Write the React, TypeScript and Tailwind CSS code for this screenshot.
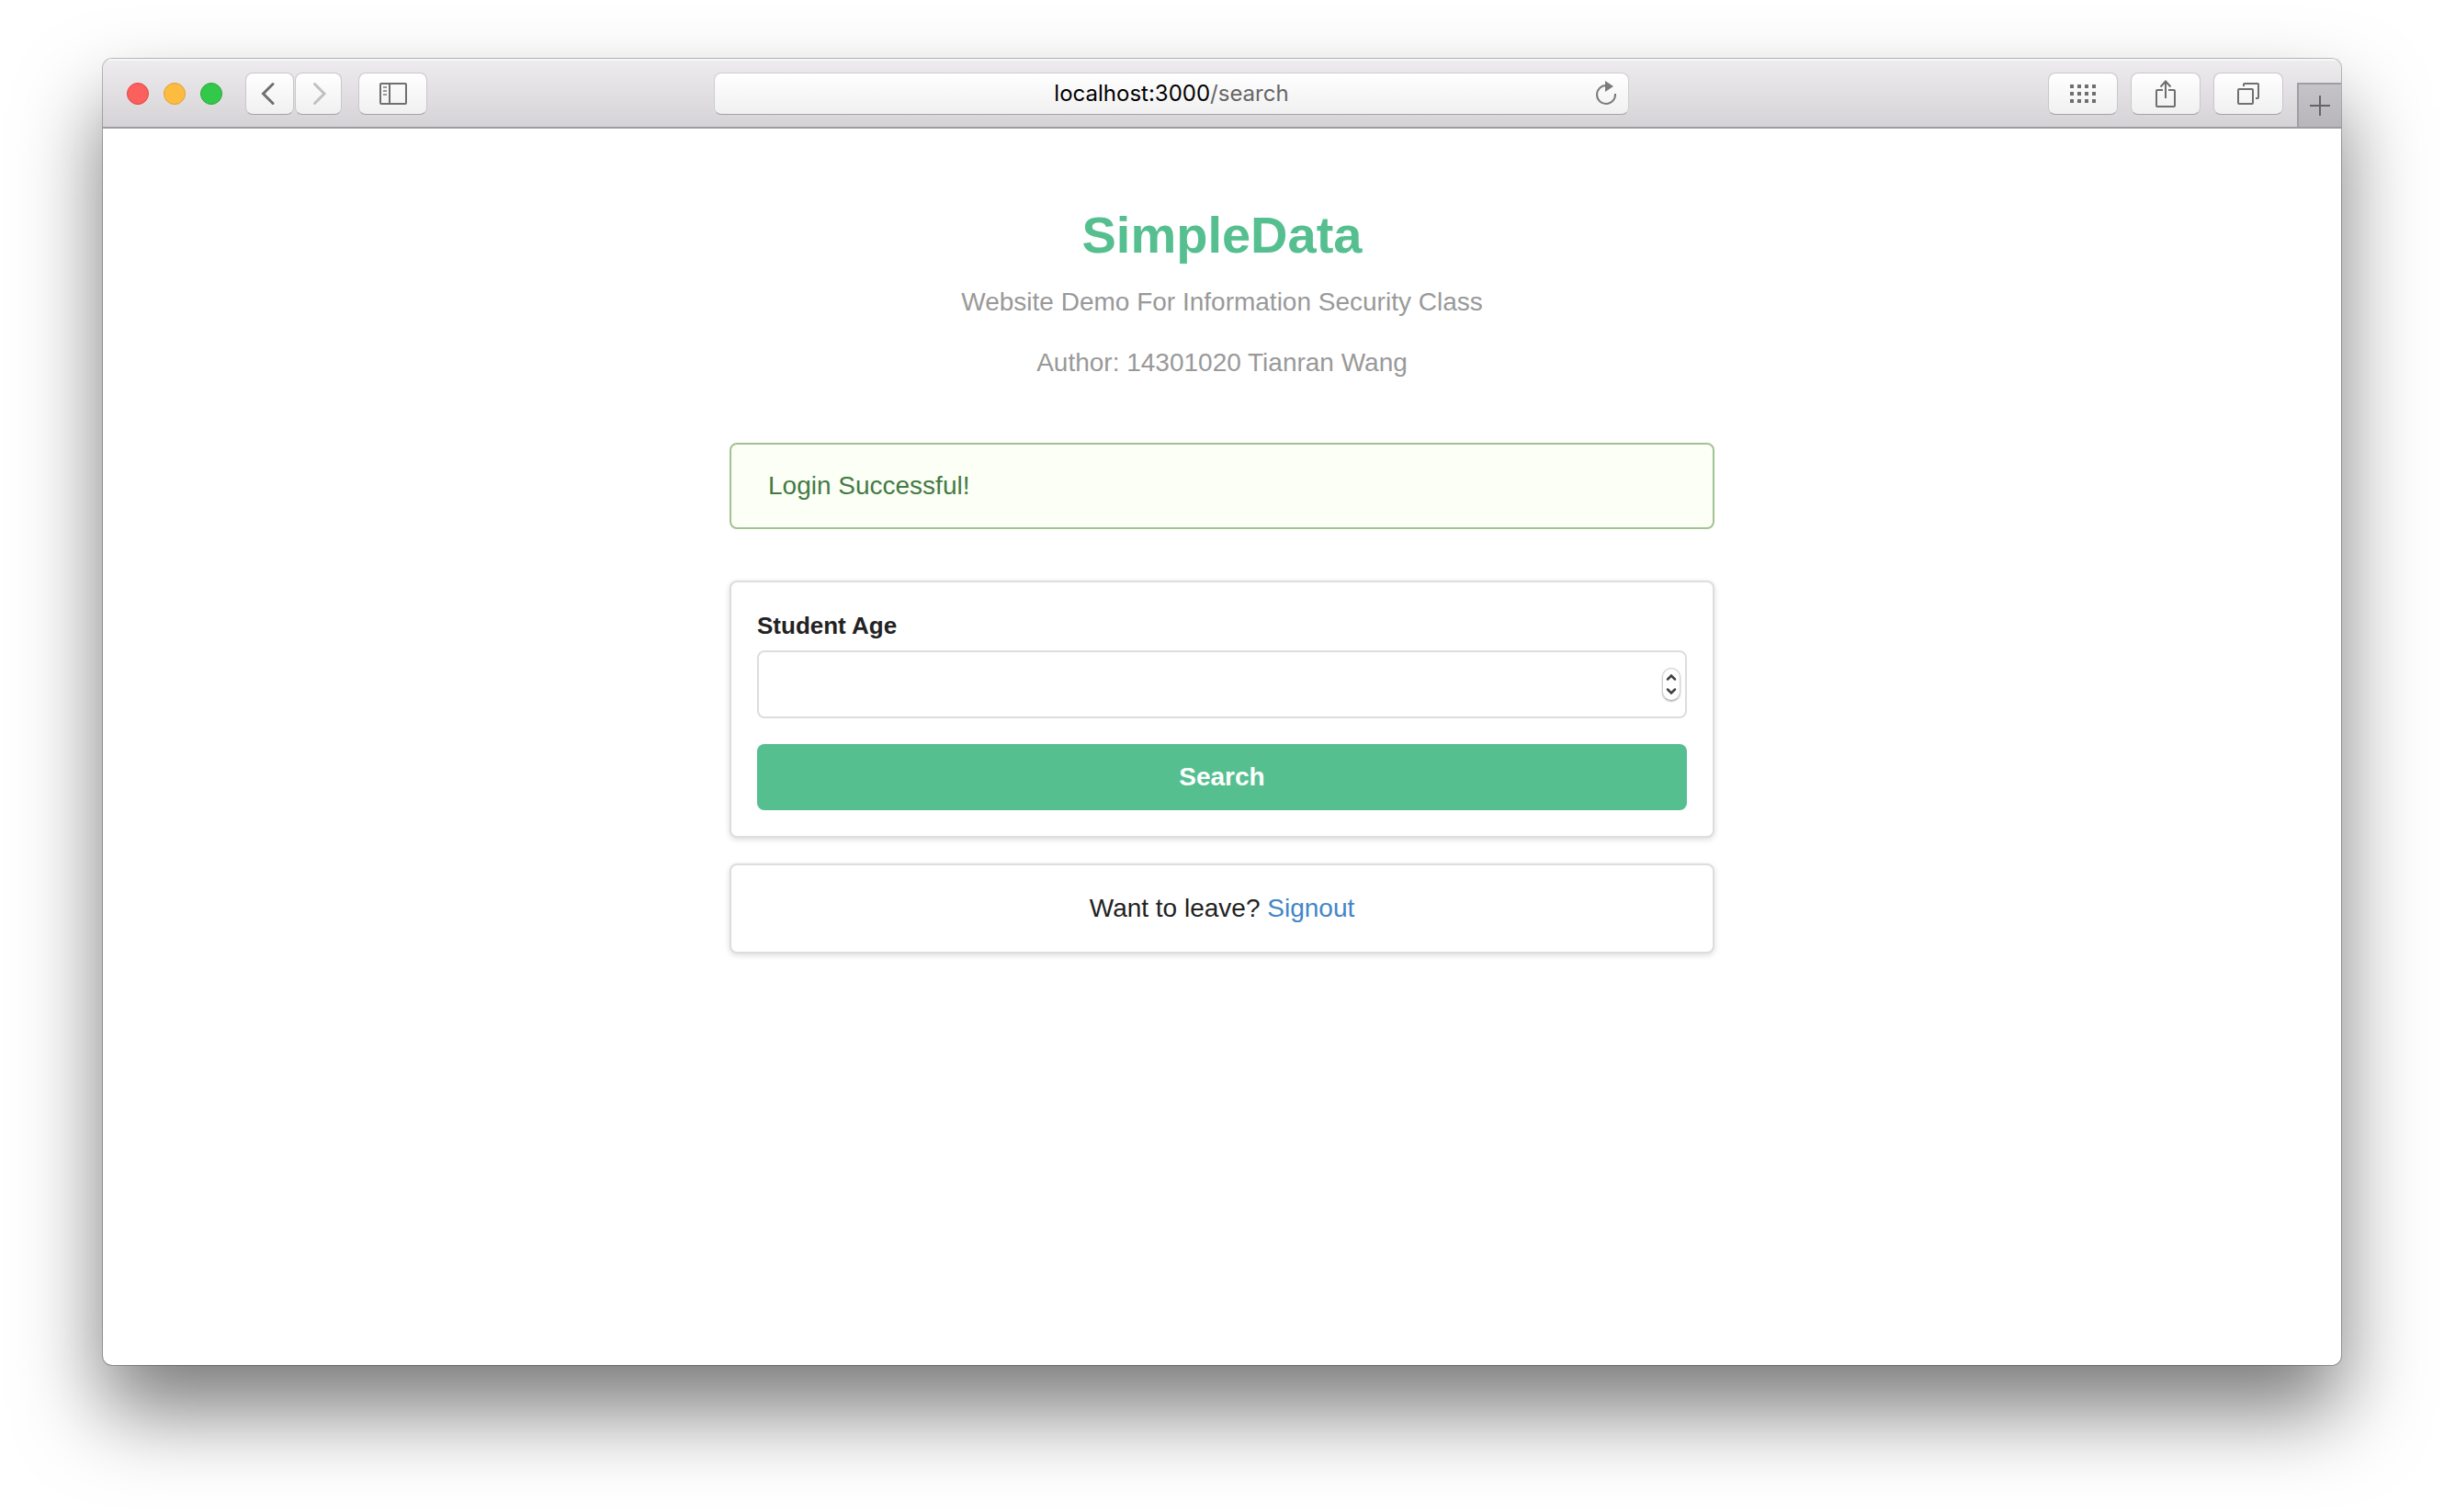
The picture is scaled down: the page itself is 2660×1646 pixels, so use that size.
import React from "react";

const toolButton =
  "flex h-[46px] items-center justify-center rounded-lg border border-[#c9c7ca] border-b-[#a5a3a6] bg-linear-to-b from-white to-[#f0f0f1] text-[#6f6f6f]";

const card =
  "rounded-lg border-2 border-[#dddddd] bg-white shadow-[0_2px_6px_rgba(0,0,0,0.14)]";

function SidebarIcon() {
  return (
    <svg width="30" height="24" viewBox="0 0 30 24" fill="none" stroke="currentColor" strokeWidth="2" aria-hidden="true">
      <rect x="1" y="1" width="28" height="22" rx="1" />
      <path d="M11 1v22" />
      <path d="M4 5h4M4 9h4M4 13h4" stroke="#9a9a9a" />
    </svg>
  );
}

function GridIcon() {
  const cells = [0, 1, 2].flatMap((r) => [0, 1, 2, 3].map((c) => [c * 8, r * 8]));
  return (
    <svg width="28" height="20" viewBox="0 0 28 20" fill="currentColor" aria-hidden="true">
      {cells.map(([x, y]) => (
        <rect key={`${x}-${y}`} x={x} y={y} width="4" height="4" />
      ))}
    </svg>
  );
}

function ShareIcon() {
  return (
    <svg width="22" height="30" viewBox="0 0 22 30" fill="none" stroke="currentColor" strokeWidth="2" aria-hidden="true">
      <path d="M8 11H2a1 1 0 0 0-1 1v16a1 1 0 0 0 1 1h18a1 1 0 0 0 1-1V12a1 1 0 0 0-1-1h-6" />
      <path d="M11 20V1.500M5.500 7.500 11 1.500l5.500 6" />
    </svg>
  );
}

function TabsIcon() {
  return (
    <svg width="24" height="24" viewBox="0 0 24 24" fill="none" stroke="currentColor" strokeWidth="2" aria-hidden="true">
      <rect x="1" y="7" width="16" height="16" rx="1" />
      <path d="M7 4V2a1 1 0 0 1 1-1h14a1 1 0 0 1 1 1v14a1 1 0 0 1-1 1h-2" />
    </svg>
  );
}

function ReloadIcon() {
  return (
    <svg width="24" height="28" viewBox="0 0 24 28" fill="none" stroke="currentColor" strokeWidth="2" aria-hidden="true">
      <path d="M12 5A10 10 0 1 0 22 14" />
      <path d="M11 0 20 6l-9 6z" fill="currentColor" stroke="none" />
    </svg>
  );
}

function Toolbar() {
  return (
    <header className="flex h-[76px] items-center border-b-2 border-[#9f9ca1] bg-linear-to-b from-[#eeecef] to-[#d5d3d6] pt-0.5 pl-[26px] shadow-[inset_0_2px_0_#f7f6f8]">
      <div className="flex gap-4">
        <button aria-label="Close" className="size-6 rounded-full border border-[#e0443e] bg-[#fc605c]" />
        <button aria-label="Minimize" className="size-6 rounded-full border border-[#dea035] bg-[#fdbc40]" />
        <button aria-label="Zoom" className="size-6 rounded-full border border-[#26ab35] bg-[#34c84a]" />
      </div>
      <nav className="ml-[25px] flex gap-px">
        <button aria-label="Back" className={`${toolButton} w-[53px]`}>
          <svg width="20" height="26" viewBox="0 0 20 26" fill="none" stroke="currentColor" strokeWidth="3" strokeLinecap="round" aria-hidden="true">
            <path d="M13 2.500 2.500 13 13 23.500" />
          </svg>
        </button>
        <button aria-label="Forward" className={`${toolButton} w-[51px]`}>
          <svg width="20" height="26" viewBox="0 0 20 26" fill="none" stroke="#c0c0c0" strokeWidth="3" strokeLinecap="round" aria-hidden="true">
            <path d="M5.500 2.500 16 13 5.500 23.500" />
          </svg>
        </button>
      </nav>
      <button aria-label="Show sidebar" className={`${toolButton} ml-[18px] w-[75px]`}>
        <SidebarIcon />
      </button>
      <div className="flex-[13]" />
      <div className="flex h-[46px] w-[996px] items-center rounded-lg border border-[#cfcdd0] border-b-[#a5a3a6] bg-linear-to-b from-white to-[#f0f0f1] pr-3 pl-9">
        <p className="flex-1 text-center font-['Inter',sans-serif] text-[24px] leading-8 text-[#666666]">
          <span className="text-black">localhost:3000</span>/search
        </p>
        <button aria-label="Reload" className="text-[#7b7b7b]">
          <ReloadIcon />
        </button>
      </div>
      <div className="flex-[19]" />
      <div className="flex gap-[14px]">
        <button aria-label="Top sites" className={`${toolButton} w-[76px]`}>
          <GridIcon />
        </button>
        <button aria-label="Share" className={`${toolButton} w-[76px]`}>
          <ShareIcon />
        </button>
        <button aria-label="Show all tabs" className={`${toolButton} w-[76px]`}>
          <TabsIcon />
        </button>
      </div>
      <button
        aria-label="New tab"
        className="ml-[15px] flex h-12 w-12 items-center justify-center self-end border-t-2 border-l-2 border-[#a19ea3] bg-linear-to-b from-[#c6c3c8] to-[#b9b6bb] text-[#666468]"
      >
        <svg width="22" height="22" viewBox="0 0 22 22" stroke="currentColor" strokeWidth="2" aria-hidden="true">
          <path d="M11 0v22M0 11h22" />
        </svg>
      </button>
    </header>
  );
}

function AgeField() {
  return (
    <>
      <label htmlFor="age" className="mb-2 block text-[26px] leading-[38px] font-bold">
        Student Age
      </label>
      <div className="relative">
        <input
          id="age"
          name="age"
          type="number"
          className="block h-[74px] w-full appearance-none rounded-lg border-2 border-[#dddddd] bg-white px-5 text-[28px] outline-none [-moz-appearance:textfield] [&::-webkit-inner-spin-button]:appearance-none"
        />
        <div className="absolute inset-y-0 right-[7px] flex items-center">
          <svg width="20" height="36" viewBox="0 0 18 34" fill="none" className="rounded-full border border-[#cfcfcf] border-b-[#b0b0b0] bg-white shadow-[0_1px_2px_rgba(0,0,0,0.25)]" aria-hidden="true">
            <path d="m5 11.500 4-4 4 4M5 22.500l4 4 4-4" stroke="#404040" strokeWidth="2.500" strokeLinecap="round" />
          </svg>
        </div>
      </div>
    </>
  );
}

export default function App() {
  return (
    <div className="flex min-h-screen flex-col bg-white px-28 pt-16 pb-40 font-['Liberation_Sans',Arial,sans-serif] text-[#222222]">
      <div className="flex flex-1 flex-col overflow-hidden rounded-[10px] bg-white shadow-[0_0_0_1px_rgba(0,0,0,0.25),0_50px_90px_rgba(0,0,0,0.52)]">
        <Toolbar />
        <main className="mx-auto w-full max-w-[1072px] pt-[84px] text-[28px] leading-[42px]">
          <div className="text-center text-[#999999]">
            <h1 className="mb-5 text-[56px] leading-[64px] font-bold text-[#55bf90]">SimpleData</h1>
            <p className="mb-6">Website Demo For Information Security Class</p>
            <p>Author: 14301020 Tianran Wang</p>
          </div>
          <div role="status" className="mt-[66px] rounded-lg border-2 border-[#a3c293] bg-[#fcfff5] px-10 py-6 text-[#447a45]">
            Login Successful!
          </div>
          <form className={`${card} mt-14 p-7`} onSubmit={(e) => e.preventDefault()}>
            <AgeField />
            <button type="submit" className="mt-7 h-[72px] w-full rounded-lg bg-[#55bf90] font-bold text-white">
              Search
            </button>
          </form>
          <div className={`${card} mt-7 py-[26px] text-center`}>
            Want to leave?{" "}
            <a href="#signout" className="text-[#4285c8]">
              Signout
            </a>
          </div>
        </main>
      </div>
    </div>
  );
}
